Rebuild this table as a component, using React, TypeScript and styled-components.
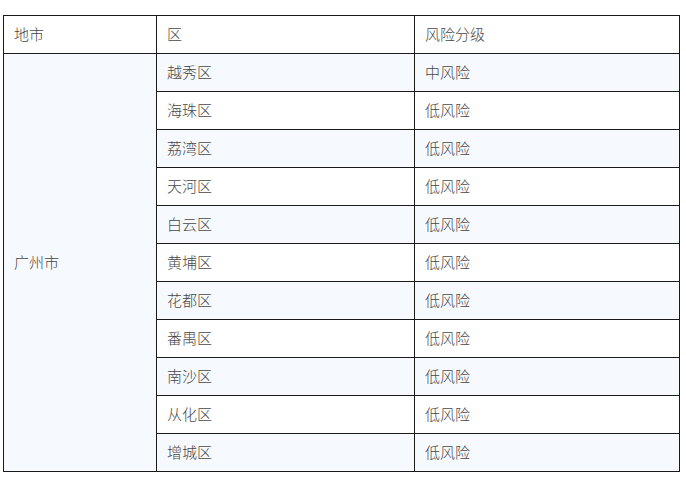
import styled, { createGlobalStyle } from "styled-components";

const GlobalStyle = createGlobalStyle`
  body {
    margin: 0;
    background: #ffffff;
    font-family: "Noto Sans CJK SC", "Noto Sans", sans-serif;
  }
`;

interface District {
  name: string;
  level: string;
}

const districts: District[] = [
  { name: "越秀区", level: "中风险" },
  { name: "海珠区", level: "低风险" },
  { name: "荔湾区", level: "低风险" },
  { name: "天河区", level: "低风险" },
  { name: "白云区", level: "低风险" },
  { name: "黄埔区", level: "低风险" },
  { name: "花都区", level: "低风险" },
  { name: "番禺区", level: "低风险" },
  { name: "南沙区", level: "低风险" },
  { name: "从化区", level: "低风险" },
  { name: "增城区", level: "低风险" },
];

export default function App() {
  return (
    <>
      <GlobalStyle />
      <Page>
        <Table>
          <colgroup>
            <col style={{ width: 153 }} />
            <col style={{ width: 258 }} />
            <col style={{ width: 265 }} />
          </colgroup>
          <thead>
            <Row>
              <Cell>地市</Cell>
              <Cell>区</Cell>
              <Cell>风险分级</Cell>
            </Row>
          </thead>
          <tbody>
            {districts.map((d, i) => (
              <Row key={d.name} $shaded={i % 2 === 0}>
                {i === 0 && (
                  <CityCell rowSpan={districts.length}>广州市</CityCell>
                )}
                <Cell>{d.name}</Cell>
                <Cell>{d.level}</Cell>
              </Row>
            ))}
          </tbody>
        </Table>
      </Page>
    </>
  );
}

const Page = styled.div`
  padding: 15px 0 0 3px;
`;

const Table = styled.table`
  border-collapse: collapse;
  table-layout: fixed;
  width: 677px;
  color: #474747;
  font-size: 15px;
  font-weight: 300;
`;

const Row = styled.tr<{ $shaded?: boolean }>`
  height: 38px;
  background: ${(props) => (props.$shaded ? "#f6f9fd" : "#ffffff")};
`;

const Cell = styled.td`
  border: 1px solid #1a1a1a;
  padding: 0 10px 1px;
  height: 37px;
  box-sizing: border-box;
  vertical-align: middle;
  text-align: left;
  line-height: 20px;
`;

const CityCell = styled(Cell)`
  background: #f6f9fd;
`;
